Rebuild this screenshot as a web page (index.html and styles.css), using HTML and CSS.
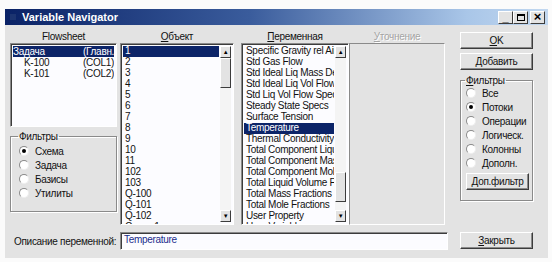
FILE: index.html
```html
<!DOCTYPE html>
<html lang="ru">
<head>
    <meta charset="UTF-8">
    <title>Variable Navigator</title>
    <link rel="stylesheet" href="styles.css">
</head>
<body>
    <div class="window">
        <div class="titlebar">
            <span class="app-icon"></span>
            <span class="title">Variable Navigator</span>
            <div class="caption-btns">
                <span class="cap-btn">_</span>
                <span class="cap-btn"><i class="max-box"></i></span>
                <span class="cap-btn close">×</span>
            </div>
        </div>

        <div class="content">
            <div class="left-area">
                <div class="columns">
                    <div class="col col-flow">
                        <div class="col-head">Flowsheet</div>
                        <div class="listbox flow-list">
                            <div class="flow-row selected"><span>Задача</span><span>(Главн.</span></div>
                            <div class="flow-row"><span class="indent">K-100</span><span>(COL1)</span></div>
                            <div class="flow-row"><span class="indent">K-101</span><span>(COL2)</span></div>
                        </div>
                        <fieldset class="group left-group">
                            <legend>Фильтры</legend>
                            <label class="radio"><span class="dot checked"></span>Схема</label>
                            <label class="radio"><span class="dot"></span>Задача</label>
                            <label class="radio"><span class="dot"></span>Базисы</label>
                            <label class="radio"><span class="dot"></span>Утилиты</label>
                        </fieldset>
                    </div>

                    <div class="col col-obj">
                        <div class="col-head"><u>О</u>бъект</div>
                        <div class="listbox scroll-list">
                            <div class="items">
                                <div class="item selected">1</div>
                                <div class="item">2</div>
                                <div class="item">3</div>
                                <div class="item">4</div>
                                <div class="item">5</div>
                                <div class="item">6</div>
                                <div class="item">7</div>
                                <div class="item">8</div>
                                <div class="item">9</div>
                                <div class="item">10</div>
                                <div class="item">11</div>
                                <div class="item">102</div>
                                <div class="item">103</div>
                                <div class="item">Q-100</div>
                                <div class="item">Q-101</div>
                                <div class="item">Q-102</div>
                                <div class="item">Сырье1</div>
                            </div>
                            <div class="scrollbar">
                                <span class="sb-btn">▲</span>
                                <div class="sb-track"><span class="sb-thumb"></span></div>
                                <span class="sb-btn">▼</span>
                            </div>
                        </div>
                    </div>

                    <div class="col col-var">
                        <div class="col-head"><u>П</u>еременная</div>
                        <div class="listbox scroll-list">
                            <div class="items">
                                <div class="item">Specific Gravity rel Air</div>
                                <div class="item">Std Gas Flow</div>
                                <div class="item">Std Ideal Liq Mass Density</div>
                                <div class="item">Std Ideal Liq Vol Flow</div>
                                <div class="item">Std Liq Vol Flow Spec</div>
                                <div class="item">Steady State Specs</div>
                                <div class="item">Surface Tension</div>
                                <div class="item selected">Temperature</div>
                                <div class="item">Thermal Conductivity</div>
                                <div class="item">Total Component Liquid</div>
                                <div class="item">Total Component Mass</div>
                                <div class="item">Total Component Molar</div>
                                <div class="item">Total Liquid Volume Flow</div>
                                <div class="item">Total Mass Fractions</div>
                                <div class="item">Total Mole Fractions</div>
                                <div class="item">User Property</div>
                                <div class="item">User Variables</div>
                            </div>
                            <div class="scrollbar">
                                <span class="sb-btn">▲</span>
                                <div class="sb-track"><span class="sb-thumb thumb-low"></span></div>
                                <span class="sb-btn">▼</span>
                            </div>
                        </div>
                    </div>

                    <div class="col col-spec">
                        <div class="col-head disabled"><u>У</u>точнение</div>
                        <div class="listbox empty-list"></div>
                    </div>
                </div>

                <div class="desc-row">
                    <span class="desc-label">Описание переменной:</span>
                    <div class="textbox">Temperature</div>
                </div>
            </div>

            <div class="right-col">
                <button class="btn"><u>O</u>K</button>
                <button class="btn"><u>Д</u>обавить</button>
                <fieldset class="group right-group">
                    <legend><u>Ф</u>ильтры</legend>
                    <label class="radio"><span class="dot"></span>Все</label>
                    <label class="radio"><span class="dot checked"></span>Потоки</label>
                    <label class="radio"><span class="dot"></span>Операции</label>
                    <label class="radio"><span class="dot"></span>Логическ.</label>
                    <label class="radio"><span class="dot"></span>Колонны</label>
                    <label class="radio"><span class="dot"></span>Дополн.</label>
                    <button class="btn small-btn">Доп.фильтр</button>
                </fieldset>
                <button class="btn close-btn"><u>З</u>акрыть</button>
            </div>
        </div>
    </div>
</body>
</html>
```

FILE: styles.css
```css
:root {
    --face: #e3e3e3;
    --shadow: #8a8a8a;
    --dark: #3c3c3c;
    --light: #ffffff;
    --navy: #0c2468;
    --text: #111111;
}

* {
    margin: 0;
    padding: 0;
    box-sizing: border-box;
}

body {
    background: #fbfbfb;
    font-family: 'Liberation Sans', Arial, sans-serif;
    font-size: 10px;
    letter-spacing: -0.3px;
    color: var(--text);
}

.window {
    margin: 9px 0 0 5px;
    width: 543px;
    height: 249px;
    background: var(--face);
    display: flex;
    flex-direction: column;
}

/* title bar */
.titlebar {
    height: 16px;
    display: flex;
    align-items: center;
    padding: 0 3px 0 5px;
    background: linear-gradient(to right, #0a2266 0%, #3a5c9c 45%, #a9c6e8 85%, #c2d8f0 100%);
}

.app-icon {
    width: 6px;
    height: 6px;
    background: #1c3470;
    margin-right: 6px;
}

.title {
    color: #fff;
    font-weight: bold;
    font-size: 11px;
    letter-spacing: 0;
}

.caption-btns {
    margin-left: auto;
    display: flex;
}

.cap-btn {
    width: 15px;
    height: 13px;
    background: var(--face);
    border: 1px solid;
    border-color: var(--light) var(--dark) var(--dark) var(--light);
    font-size: 11px;
    font-weight: bold;
    line-height: 10px;
    color: #000;
    display: flex;
    align-items: center;
    justify-content: center;
}

.cap-btn.close {
    margin-left: 2px;
    font-size: 13px;
}

.max-box {
    width: 8px;
    height: 7px;
    border: 1px solid #000;
    border-top-width: 2px;
}

/* content */
.content {
    flex: 1;
    display: flex;
    padding: 0 15px 0 5px;
}

.left-area {
    display: flex;
    flex-direction: column;
    width: 438px;
}

.columns {
    display: flex;
}

.col {
    display: flex;
    flex-direction: column;
}

.col-head {
    height: 18px;
    line-height: 12px;
    padding-top: 6px;
    text-align: center;
}

.col-head.disabled {
    color: #a4a4a4;
    text-shadow: 1px 1px 0 #fff;
}

.col-flow { width: 107px; }
.col-obj { width: 114px; margin-left: 3px; }
.col-var { width: 108px; margin-left: 7px; }
.col-spec { width: 96px; }

.listbox {
    background: #fcfcff;
    border: 1px solid;
    border-color: var(--shadow) var(--light) var(--light) var(--shadow);
    box-shadow: inset 1px 1px 0 var(--dark);
    overflow: hidden;
}

.flow-list {
    height: 84px;
    padding: 2px 2px 0 2px;
}

.flow-row {
    display: grid;
    grid-template-columns: 70px 1fr;
    height: 11px;
    line-height: 11px;
    white-space: nowrap;
    overflow: hidden;
}

.flow-row .indent {
    padding-left: 11px;
}

.selected {
    background: var(--navy);
    color: #fff;
}

.scroll-list {
    height: 182px;
    display: flex;
    padding: 2px 2px 0 2px;
}

.items {
    flex: 1;
    overflow: hidden;
}

.item {
    height: 11px;
    line-height: 10px;
    padding-left: 2px;
    white-space: nowrap;
    overflow: hidden;
    text-overflow: clip;
}

.scrollbar {
    width: 11px;
    display: flex;
    flex-direction: column;
    margin-left: 1px;
    margin-bottom: 2px;
}

.sb-btn {
    height: 12px;
    background: var(--face);
    border: 1px solid;
    border-color: var(--light) var(--dark) var(--dark) var(--light);
    font-size: 6px;
    line-height: 10px;
    text-align: center;
    color: #000;
}

.sb-track {
    flex: 1;
    background: #f4f4f4;
    display: flex;
    flex-direction: column;
}

.sb-thumb {
    height: 30px;
    background: var(--face);
    border: 1px solid;
    border-color: var(--light) var(--dark) var(--dark) var(--light);
}

.thumb-low {
    margin-top: auto;
    margin-bottom: 8px;
}

.empty-list {
    height: 182px;
    background: var(--face);
    box-shadow: none;
}

/* group boxes */
.group {
    border: 1px solid var(--shadow);
    box-shadow: 1px 1px 0 var(--light), inset 1px 1px 0 var(--light);
    padding: 4px 0 0 8px;
}

.group legend {
    padding: 0 1px;
    margin-left: -1px;
}

.left-group {
    margin-top: 4px;
    height: 81px;
    padding-top: 2px;
}

.radio {
    display: flex;
    align-items: center;
    height: 14px;
    gap: 6px;
}

.dot {
    width: 10px;
    height: 10px;
    border-radius: 50%;
    background: #fff;
    border: 1px solid;
    border-color: var(--shadow) #eee #eee var(--shadow);
    display: flex;
    align-items: center;
    justify-content: center;
}

.dot.checked::after {
    content: "";
    width: 4px;
    height: 4px;
    border-radius: 50%;
    background: #000;
}

/* bottom row */
.desc-row {
    display: flex;
    align-items: center;
    margin-top: 7px;
}

.desc-label {
    width: 110px;
    padding-left: 4px;
    white-space: nowrap;
}

.textbox {
    width: 328px;
    height: 18px;
    line-height: 14px;
    padding-left: 3px;
    background: #fcfcff;
    color: #1a2c8c;
    border: 1px solid;
    border-color: var(--shadow) var(--light) var(--light) var(--shadow);
    box-shadow: inset 1px 1px 0 var(--dark);
}

/* right column */
.right-col {
    margin-left: 12px;
    width: 73px;
    display: flex;
    flex-direction: column;
    padding-top: 7px;
}

.btn {
    height: 17px;
    background: var(--face);
    border: 1px solid;
    border-color: var(--light) var(--dark) var(--dark) var(--light);
    box-shadow: inset -1px -1px 0 var(--shadow);
    font-family: inherit;
    font-size: 10px;
    letter-spacing: -0.3px;
    color: var(--text);
}

.btn + .btn {
    margin-top: 4px;
}

.right-group {
    margin-top: 5px;
    height: 126px;
    padding: 0 0 0 5px;
}

.small-btn {
    width: 63px;
    margin-top: 3px;
}

.close-btn {
    margin-top: auto;
    margin-bottom: 9px;
}
```
